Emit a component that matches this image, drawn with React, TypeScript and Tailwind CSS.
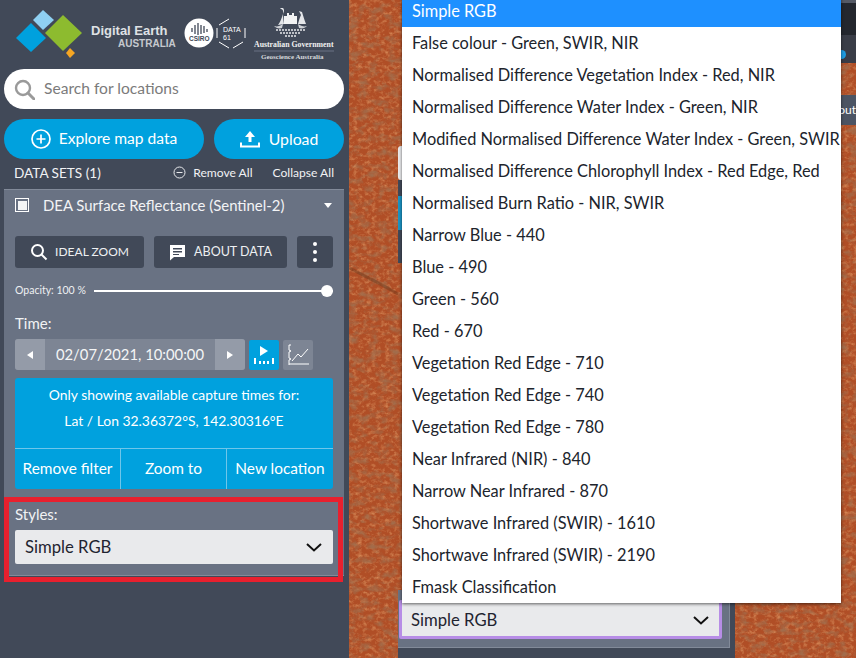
import React from "react";

const OPTIONS = [
  "False colour - Green, SWIR, NIR",
  "Normalised Difference Vegetation Index - Red, NIR",
  "Normalised Difference Water Index - Green, NIR",
  "Modified Normalised Difference Water Index - Green, SWIR",
  "Normalised Difference Chlorophyll Index - Red Edge, Red",
  "Normalised Burn Ratio - NIR, SWIR",
  "Narrow Blue - 440",
  "Blue - 490",
  "Green - 560",
  "Red - 670",
  "Vegetation Red Edge - 710",
  "Vegetation Red Edge - 740",
  "Vegetation Red Edge - 780",
  "Near Infrared (NIR) - 840",
  "Narrow Near Infrared - 870",
  "Shortwave Infrared (SWIR) - 1610",
  "Shortwave Infrared (SWIR) - 2190",
  "Fmask Classification",
];

function Logos() {
  return (
    <div className="h-[63px] shrink-0 flex items-start">
      <svg width="349" height="63" viewBox="0 0 349 63">
        <polygon points="43,10 54,20 43,30 33,20" fill="#8fd0f2" />
        <polygon points="31,23 46,38 31,52 16,38" fill="#00a1de" />
        <polygon points="63,15 82,33 63,51 45,33" fill="#8dbb2f" />
        <polygon points="70,48 75,53 70,58 66,53" fill="#f5a623" />
        <circle cx="199" cy="33" r="14.500" fill="#fff" />
        <path d="M192 28v4M195 25v9M198 23v12M201 25v9M204 26v7M207 29v3" stroke="#414958" strokeWidth="1.300" />
        <path d="M219 25l10-6M217 28v10M219 42l10 6M233 48l10-6M245 28v10" stroke="#fff" strokeWidth="1" fill="none" />
        <path d="M284 24V16h3v-3h2v2h3v-2h2v3h3v8z" fill="#f2f3f4" />
        <path d="M284 24c-1-5-1-10-1-13 0-1-1-2-2-2l-1-1 3 0c1 1 1 2 1 3l-2 6c-1 3-2 5-4 8zM298 24c1-4 2-7 3-9l-2-4 3 1c1 3 2 7 4 12z" fill="#e4e6e9" />
        <path d="M274 26c3 1 6 0 9-2l-1 4c-3 1-6 0-8-2zM307 26c-3 1-6 0-9-2l1 4c3 1 6 0 8-2z" fill="#cfd2d7" />
        <path d="M276 30h29M280 33h21M285 36h11" stroke="#e6e8ea" strokeWidth="1.500" strokeDasharray="2 1" />
        <line x1="254" y1="51" x2="334" y2="51" stroke="#6b7384" strokeWidth="1" />
      </svg>
    </div>
  );
}

function Search() {
  return (
    <svg width="21" height="21" viewBox="0 0 21 21" fill="none" stroke="#9a9a9a" strokeWidth="2.400">
      <circle cx="9" cy="9" r="7" />
      <path d="M14 14l6 6" strokeLinecap="round" strokeWidth="3" />
    </svg>
  );
}

function Sidebar() {
  return (
    <aside className="relative w-[349px] shrink-0 h-full bg-[#414958] flex flex-col">
      <Logos />
      <div className="absolute left-[91px] top-[23px] text-[13px] leading-[15px] font-bold text-[#dfe1e4] font-['Liberation_Sans',sans-serif]">Digital Earth</div>
      <div className="absolute left-[118px] top-[38px] text-[10px] leading-[12px] font-bold text-[#c6c9cf] font-['Liberation_Sans',sans-serif]">AUSTRALIA</div>
      <div className="absolute left-[189px] top-[35px] text-[6.500px] leading-[7px] font-bold text-[#414958] font-['Liberation_Sans',sans-serif]">CSIRO</div>
      <div className="absolute left-[223px] top-[26px] text-[7px] leading-[8px] text-white font-['Liberation_Sans',sans-serif]">DATA<br />61</div>
      <div className="absolute left-[254px] top-[40px] text-[7.800px] leading-[10px] font-bold text-[#f0f0f0] font-['Liberation_Serif',serif] whitespace-nowrap">Australian Government</div>
      <div className="absolute left-[261px] top-[53px] text-[7px] leading-[9px] font-bold text-[#d6d8dc] font-['Liberation_Serif',serif] whitespace-nowrap">Geoscience Australia</div>

      <div className="mt-[6px] mx-[4px] w-[340px] h-[40px] rounded-full bg-white flex items-center pl-[10px] gap-[9px]">
        <Search />
        <span className="text-[15.600px] text-[#7b7b7b]">Search for locations</span>
      </div>

      <div className="mt-[10px] mx-[4px] flex gap-[10px]">
        <div className="w-[200px] h-[40px] rounded-full bg-[#00a1de] text-white flex items-center justify-center gap-[8px]">
          <svg width="20" height="20" viewBox="0 0 20 20" fill="none" stroke="#fff" strokeWidth="1.700">
            <circle cx="10" cy="10" r="9" />
            <path d="M10 5.500v9M5.500 10h9" />
          </svg>
          <span className="text-[15.600px]">Explore map data</span>
        </div>
        <div className="w-[130px] h-[40px] rounded-full bg-[#00a1de] text-white flex items-center justify-center gap-[9px]">
          <svg width="20" height="18" viewBox="0 0 20 18" fill="#fff">
            <path d="M10 1l5 6h-3.500v5h-3V7H5z" />
            <path d="M0 12.500h2v3h16v-3h2v5H0z" />
          </svg>
          <span className="text-[15.800px]">Upload</span>
        </div>
      </div>

      <div className="mt-[2px] h-[24px] pl-[14px] pr-[15px] flex items-center text-[#f1f2f4]">
        <span className="text-[13.600px]">DATA SETS (1)</span>
        <span className="ml-auto flex items-center gap-[7px] text-[12.100px]">
          <svg width="13" height="13" viewBox="0 0 13 13" fill="none" stroke="#e8e9ec" strokeWidth="1">
            <circle cx="6.500" cy="6.500" r="5.500" />
            <path d="M3.500 6.500h6" />
          </svg>
          Remove All
        </span>
        <span className="ml-[20px] text-[12.100px]">Collapse All</span>
      </div>

      <section className="mt-[4px] mx-[4px] w-[340px] h-[387px] bg-[#697283] border-t border-b border-[#828a99] px-[11px]">
        <div className="h-[30px] flex items-center">
          <div className="w-[14px] h-[14px] border-[1.500px] border-white flex items-center justify-center">
            <div className="w-[9px] h-[9px] bg-[#f4f5f6]" />
          </div>
          <span className="ml-[14px] text-[14.900px] text-[#f3f4f6]">DEA Surface Reflectance (Sentinel-2)</span>
          <div className="ml-auto mr-[1px] w-0 h-0 border-x-[4px] border-x-transparent border-t-[5px] border-t-white" />
        </div>

        <div className="mt-[16px] flex gap-[10px]">
          <div className="w-[129px] h-[32px] rounded-[3px] bg-[#414958] text-[#eef0f2] flex items-center justify-center gap-[7px]">
            <svg width="18" height="18" viewBox="0 0 18 18" fill="none" stroke="#fff" strokeWidth="2">
              <circle cx="7.500" cy="7.500" r="5.500" />
              <path d="M11.500 11.500l5 5" />
            </svg>
            <span className="text-[12px]">IDEAL ZOOM</span>
          </div>
          <div className="w-[133px] h-[32px] rounded-[3px] bg-[#414958] text-[#eef0f2] flex items-center justify-center gap-[8px]">
            <svg width="17" height="17" viewBox="0 0 17 17" fill="#fff">
              <path d="M1 1h15v12H5l-4 3.500zM4 4v1.500h9V4zm0 3v1.500h9V7zm0 3v1h6v-1z" fillRule="evenodd" />
            </svg>
            <span className="text-[12.500px]">ABOUT DATA</span>
          </div>
          <div className="w-[36px] h-[32px] rounded-[3px] bg-[#414958] flex flex-col items-center justify-center gap-[4px]">
            <div className="w-[4px] h-[4px] rounded-full bg-white" />
            <div className="w-[4px] h-[4px] rounded-full bg-white" />
            <div className="w-[4px] h-[4px] rounded-full bg-white" />
          </div>
        </div>

        <div className="mt-[16px] h-[14px] flex items-center">
          <span className="text-[10.500px] text-[#eef0f2] w-[79px] whitespace-nowrap">Opacity: 100 %</span>
          <div className="relative w-[239px] h-[2px] bg-white">
            <div className="absolute right-0 -top-[5px] w-[12px] h-[12px] rounded-full bg-white" />
          </div>
        </div>

        <div className="mt-[16px] text-[15px] leading-[18px] text-[#f1f2f4]">Time:</div>

        <div className="mt-[7px] flex items-center">
          <div className="w-[230px] h-[31px] flex bg-[#7d8594] rounded-[3px] overflow-hidden">
            <div className="w-[30px] bg-[#949ba8] flex items-center justify-center">
              <div className="w-0 h-0 border-y-[4.500px] border-y-transparent border-r-[6px] border-r-white" />
            </div>
            <div className="flex-1 flex items-center justify-center text-[14.800px] text-[#f4f5f6]">02/07/2021, 10:00:00</div>
            <div className="w-[30px] bg-[#949ba8] flex items-center justify-center">
              <div className="w-0 h-0 border-y-[4.500px] border-y-transparent border-l-[6px] border-l-white" />
            </div>
          </div>
          <div className="ml-[4px] w-[30px] h-[30px] rounded-[2px] bg-[#00a1de] flex items-center justify-center">
            <svg width="22" height="20" viewBox="0 0 22 20" fill="#fff">
              <path d="M7 1l8 5-8 5z" />
              <path d="M1 13h2v6H1zM6 16h2v3H6zM10 16h2v3h-2zM14 16h2v3h-2zM19 13h2v6h-2z" />
            </svg>
          </div>
          <div className="ml-[4px] w-[30px] h-[30px] rounded-[2px] bg-[#7d8594] flex items-center justify-center">
            <svg width="24" height="22" viewBox="0 0 24 22" fill="none" stroke="#fff" strokeWidth="1">
              <path d="M3 1v5M5 1H3M3 6l2 1-2 1v6M3 14l2 1-2 1v5M3 20h20M6 17l6-7 3 3 7-8" />
            </svg>
          </div>
        </div>

        <div className="mt-[8px] w-[318px] h-[111px] rounded-[3px] bg-[#00a1de] text-white flex flex-col">
          <div className="h-[71px] border-b border-[#6fc6ea] flex flex-col items-center pt-[4px] text-[13.900px]">
            <div className="h-[26px] flex items-center">Only showing available capture times for:</div>
            <div className="h-[26px] flex items-center">Lat / Lon 32.36372°S, 142.30316°E</div>
          </div>
          <div className="flex-1 flex text-[15.400px]">
            <div className="w-[106px] flex items-center justify-center border-r border-[#6fc6ea]">Remove filter</div>
            <div className="w-[106px] flex items-center justify-center border-r border-[#6fc6ea]">Zoom to</div>
            <div className="flex-1 flex items-center justify-center">New location</div>
          </div>
        </div>

        <div className="mt-[16px] text-[15px] leading-[18px] text-[#f1f2f4]">Styles:</div>
        <div className="mt-[7px] w-[318px] h-[34px] rounded-[2px] bg-[#e9eaec] flex items-center pl-[10px] pr-[11px] pt-[1px] text-[#1f2430]">
          <span className="text-[16.700px]">Simple RGB</span>
          <svg className="ml-auto" width="16" height="9" viewBox="0 0 16 9" fill="none" stroke="#111" strokeWidth="2">
            <path d="M1 1l7 6.500L15 1" />
          </svg>
        </div>
      </section>

      <div className="absolute left-[4px] top-[497px] w-[339px] h-[85px] border-[5px] border-[#e8202e]" />
      <div className="absolute left-[339px] top-[17px] h-[32px] w-[40px] rounded-r-full bg-[#414958] flex items-center justify-center pl-[4px]">
        <svg width="15" height="15" viewBox="0 0 16 16" stroke="#b9bec6" strokeWidth="2.200">
          <path d="M1 1l14 14M15 1L1 15" />
        </svg>
      </div>
    </aside>
  );
}

function MapTexture() {
  return (
    <svg className="absolute inset-0 w-full h-full" width="507" height="658">
      <defs>
        <filter id="ground" x="0" y="0" width="100%" height="100%">
          <feTurbulence type="fractalNoise" baseFrequency="0.22 0.26" numOctaves="5" seed="11" />
          <feColorMatrix type="matrix" values="0 0 0 0 0.84  0 0 0 0 0.42  0 0 0 0 0.18  1.300 0 0 0 -0.6" />
        </filter>
        <filter id="dark" x="0" y="0" width="100%" height="100%">
          <feTurbulence type="fractalNoise" baseFrequency="0.1 0.14" numOctaves="6" seed="3" />
          <feColorMatrix type="matrix" values="0 0 0 0 0.36  0 0 0 0 0.15  0 0 0 0 0.07  0 2.400 0 0 -1.100" />
        </filter>
      </defs>
      <rect width="100%" height="100%" fill="#b04e26" />
      <rect width="100%" height="100%" filter="url(#ground)" />
      <rect width="100%" height="100%" filter="url(#dark)" />
      <path d="M1 268c10 6 28 14 48 26" stroke="#5a3018" strokeWidth="3" fill="none" opacity="0.35" />
    </svg>
  );
}

function MapArea() {
  return (
    <main className="relative flex-1 h-full overflow-hidden">
      <MapTexture />
      {/* panels of the map viewer hidden behind the dropdown */}
      <div className="absolute left-[49px] top-[180px] w-[5px] h-[83px] bg-[#414958]" />
      <div className="absolute left-[49px] top-[146px] w-[5px] h-[34px] rounded-l-[3px] bg-[#e9eaec]" />
      <div className="absolute left-[49px] top-[196px] w-[5px] h-[34px] bg-[#1a94c4]" />
      <div className="absolute left-[492px] top-0 w-[15px] h-[63px] bg-[#3a3d47]">
        <div className="h-[3px] bg-[#555a66]" />
        <div className="h-[32px] bg-[#24272e]" />
        <div className="absolute -left-[4px] top-[50px] w-[9px] h-[9px] rounded-full bg-[#1d9be0]" />
      </div>
      <div className="absolute left-[492px] top-[95px] w-[15px] h-[30px] bg-[#4c5463] text-[12px] text-white flex items-center justify-end overflow-hidden">
        <span>out</span>
      </div>
      <div className="absolute left-[49px] top-[590px] w-[337px] h-[68px] bg-[#414958]" />
      <div className="absolute left-[49px] top-[590px] w-[332px] h-[58px] border-b border-r border-[#828a99] bg-[#697283]" />
      <div className="absolute left-[50px] top-[600px] w-[323px] h-[39px] rounded-[2px] border-[3px] border-[#b78de6] bg-[#e9eaec] flex items-center pl-[9px] pr-[10px] pt-[2px] text-[#1f2430]">
        <span className="text-[16.700px]">Simple RGB</span>
        <svg className="ml-auto" width="16" height="9" viewBox="0 0 16 9" fill="none" stroke="#111" strokeWidth="2">
          <path d="M1 1l7 6.500L15 1" />
        </svg>
      </div>
      <div className="absolute left-[53px] -top-[5px] w-[439px] h-[608px] bg-white shadow-[0_1px_3px_rgba(0,0,0,0.6)] text-[16.350px] text-[#20242c]">
        <div className="h-[32px] bg-[#1e90ff] text-white flex items-center pl-[10px]">Simple RGB</div>
        {OPTIONS.map((o) => (
          <div key={o} className="h-[32px] flex items-center pl-[10px] whitespace-nowrap">{o}</div>
        ))}
      </div>
    </main>
  );
}

export default function App() {
  return (
    <div className="w-[856px] h-[658px] flex overflow-hidden font-['Lato',sans-serif]">
      <Sidebar />
      <MapArea />
    </div>
  );
}
